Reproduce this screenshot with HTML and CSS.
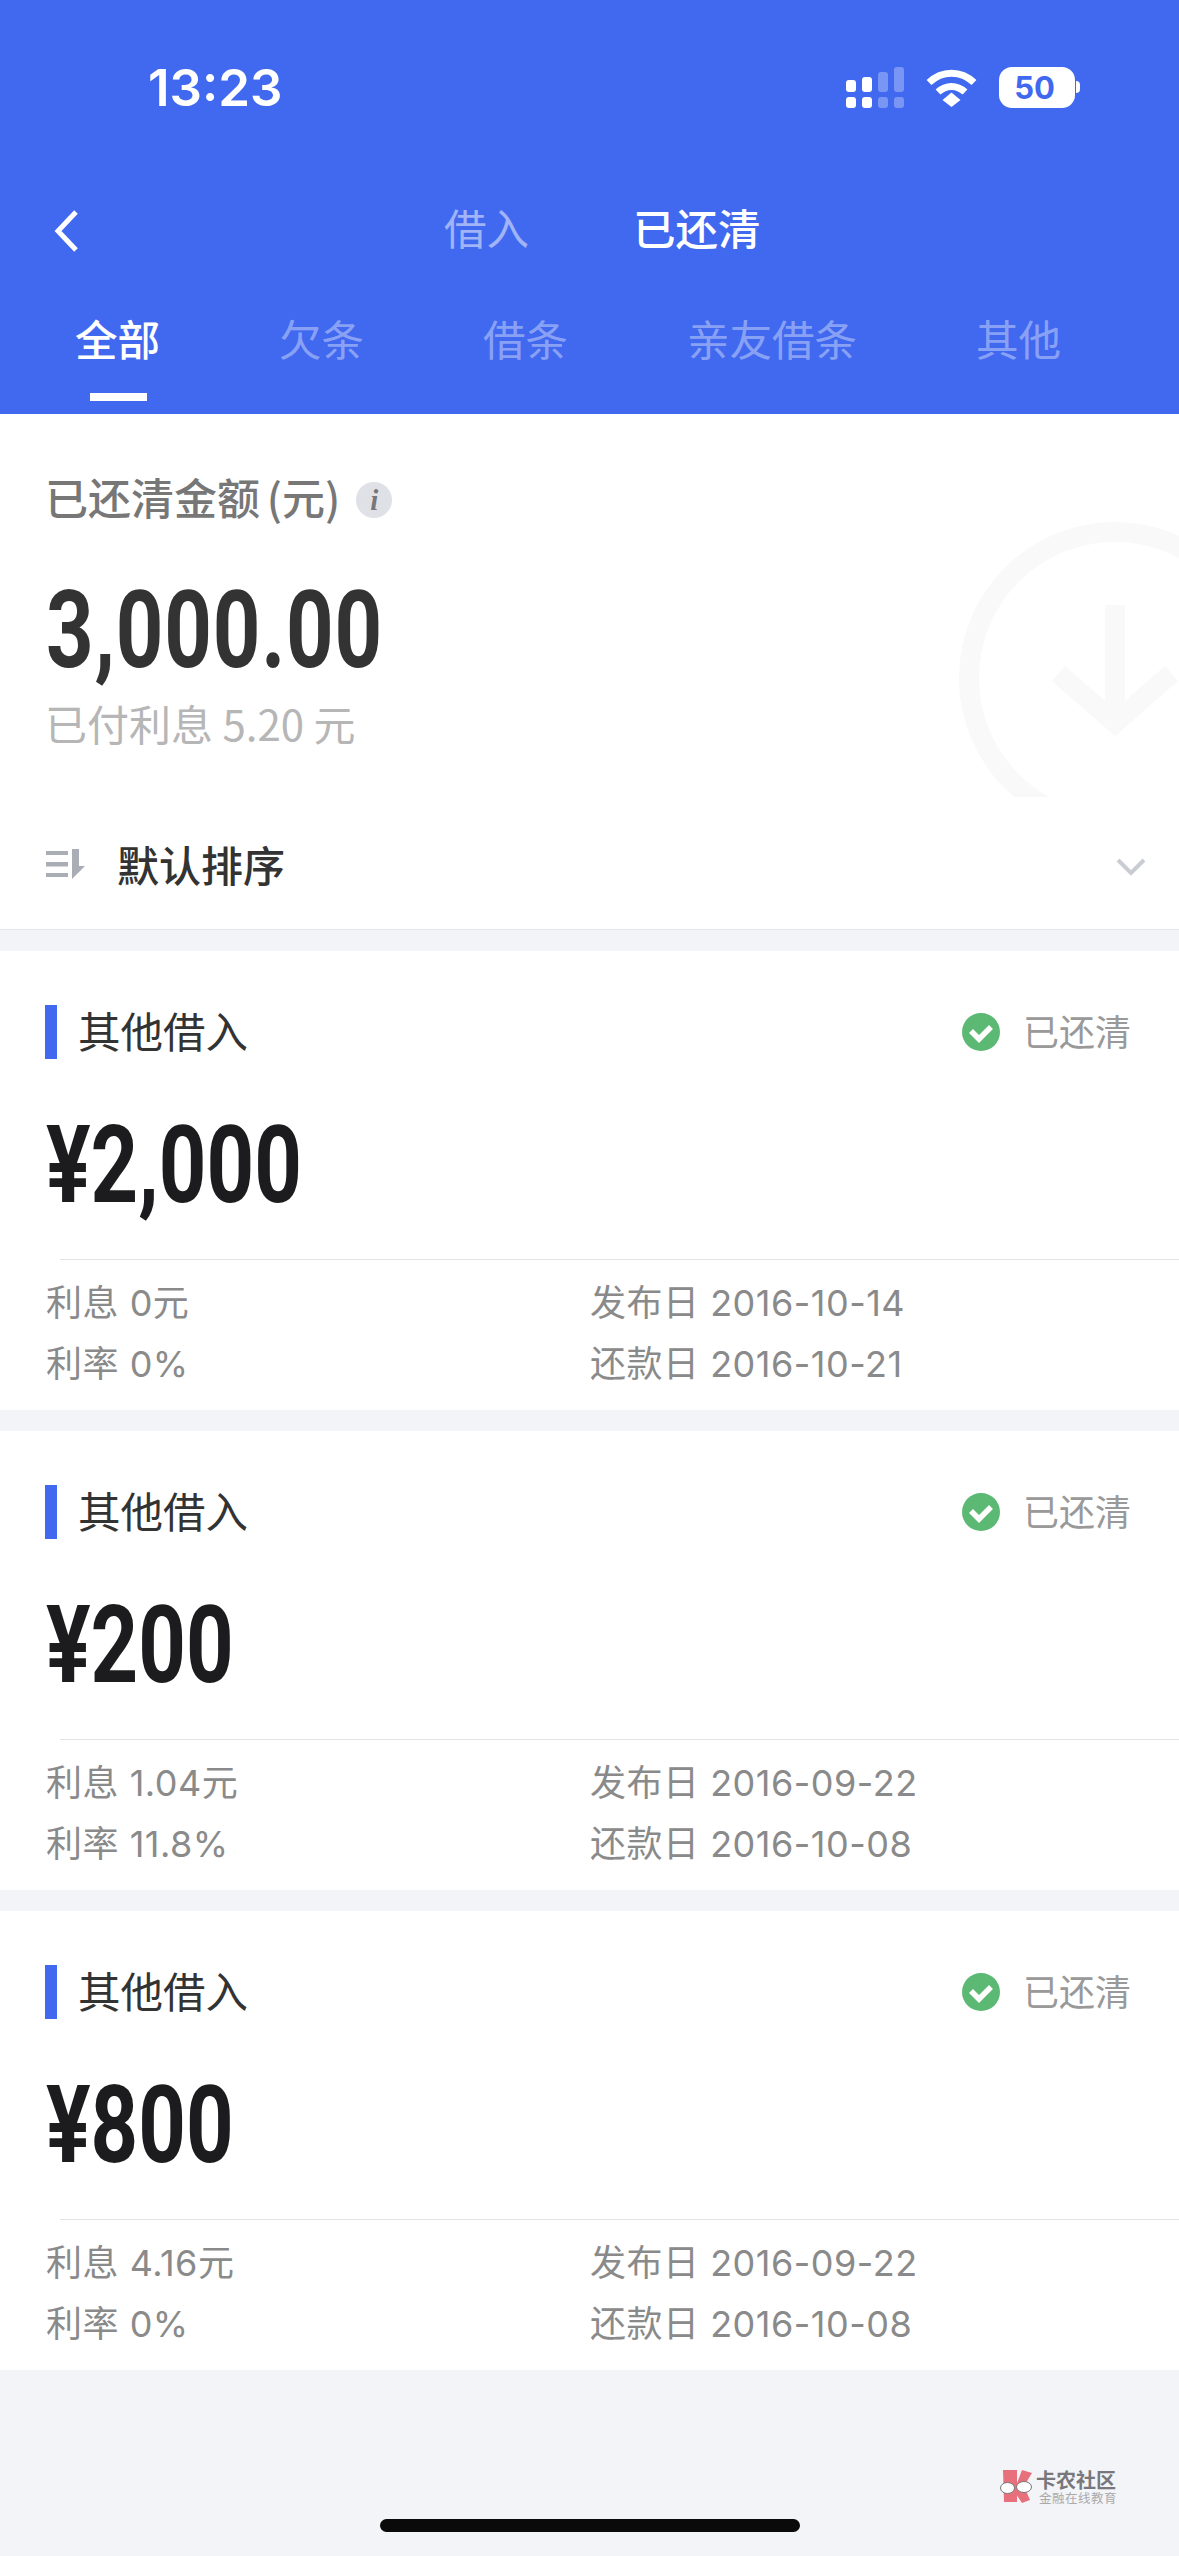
FILE: index.html
```html
<!DOCTYPE html>
<html lang="en">
<head>
    <meta charset="UTF-8">
    <meta name="viewport" content="width=device-width, initial-scale=1.0">
    <title>已还清</title>
    <link rel="stylesheet" href="styles.css">
</head>
<body>
    <div class="page">
        <header class="header">
            <div class="status-bar">
                <span class="time">13:23</span>
                <div class="status-icons">
                    <svg class="signal" width="58" height="41" viewBox="0 0 58 41" fill="#fff">
                        <rect x="0" y="13" width="10" height="12" rx="3"/>
                        <rect x="0" y="30" width="10" height="11" rx="3"/>
                        <rect x="16" y="10" width="10" height="15" rx="3"/>
                        <rect x="16" y="30" width="10" height="11" rx="3"/>
                        <g opacity="0.3">
                            <rect x="32" y="5" width="10" height="20" rx="3"/>
                            <rect x="32" y="30" width="10" height="11" rx="3"/>
                            <rect x="48" y="0" width="10" height="25" rx="3"/>
                            <rect x="48" y="30" width="10" height="11" rx="3"/>
                        </g>
                    </svg>
                    <svg class="wifi" width="51" height="38" viewBox="0 0 51 38" fill="none" stroke="#fff" stroke-width="7">
                        <path d="M3 13.5 C16 1 35 1 48 13.5"/>
                        <path d="M12 23 C20 15.5 31 15.5 39 23"/>
                        <path d="M16.5 31 L25.5 23.5 L34.5 31 L25.5 38 Z" fill="#fff" stroke="none"/>
                    </svg>
                    <div class="battery">50</div>
                </div>
            </div>

            <nav class="nav">
                <svg class="back" width="24" height="42" viewBox="0 0 24 42" fill="none" stroke="#fff" stroke-width="5">
                    <path d="M22 2 L4 21 L22 40"/>
                </svg>
                <div class="nav-links">
                    <span class="nav-link">借入</span>
                    <span class="nav-link active">已还清</span>
                </div>
            </nav>

            <div class="tabs">
                <span class="tab active">全部</span>
                <span class="tab">欠条</span>
                <span class="tab">借条</span>
                <span class="tab">亲友借条</span>
                <span class="tab">其他</span>
            </div>
        </header>

        <section class="summary">
            <svg class="summary-mark" width="259" height="307" viewBox="0 0 259 307" fill="none" stroke="#f9f9f9" stroke-width="20">
                <circle cx="195" cy="188" r="146"/>
                <path d="M195 115 V235"/>
                <path d="M138.500 183.500 L195 232.700 L251.500 183.500"/>
            </svg>
            <div class="summary-label">
                <span class="summary-title">已还清金额 (元)</span>
                <span class="info-icon">i</span>
            </div>
            <div class="big-amount summary-amount"><span>3,000.00</span></div>
            <div class="summary-sub">已付利息 5.20 元</div>
            <div class="sort-row">
                <svg class="sort-icon" width="40" height="30" viewBox="0 0 40 30" fill="#a9adb6">
                    <rect x="0" y="2" width="22" height="4"/>
                    <rect x="0" y="13" width="22" height="4.500"/>
                    <rect x="0" y="24" width="22" height="4"/>
                    <path d="M26 0 H33 V17 H39 L26 30 Z"/>
                </svg>
                <span class="sort-text">默认排序</span>
                <svg class="sort-arrow" width="30" height="18" viewBox="0 0 30 18" fill="none" stroke="#c9cdd3" stroke-width="4">
                    <path d="M2 2 L15 15 L28 2"/>
                </svg>
            </div>
        </section>

        <section class="card">
            <div class="card-head">
                <span class="card-title">其他借入</span>
                <div class="card-status">
                    <svg class="check" width="38" height="38" viewBox="0 0 38 38">
                        <circle cx="19" cy="19" r="19" fill="#5cb974"/>
                        <path d="M9 18 L17 26 L29 14" fill="none" stroke="#fff" stroke-width="5.500"/>
                    </svg>
                    <span class="status-text">已还清</span>
                </div>
            </div>
            <div class="big-amount card-amount"><span>¥2,000</span></div>
            <div class="card-line"></div>
            <div class="card-info">
                <span>利息 0元</span>
                <span>发布日 2016-10-14</span>
                <span>利率 0%</span>
                <span>还款日 2016-10-21</span>
            </div>
        </section>

        <section class="card">
            <div class="card-head">
                <span class="card-title">其他借入</span>
                <div class="card-status">
                    <svg class="check" width="38" height="38" viewBox="0 0 38 38">
                        <circle cx="19" cy="19" r="19" fill="#5cb974"/>
                        <path d="M9 18 L17 26 L29 14" fill="none" stroke="#fff" stroke-width="5.500"/>
                    </svg>
                    <span class="status-text">已还清</span>
                </div>
            </div>
            <div class="big-amount card-amount"><span>¥200</span></div>
            <div class="card-line"></div>
            <div class="card-info">
                <span>利息 1.04元</span>
                <span>发布日 2016-09-22</span>
                <span>利率 11.8%</span>
                <span>还款日 2016-10-08</span>
            </div>
        </section>

        <section class="card">
            <div class="card-head">
                <span class="card-title">其他借入</span>
                <div class="card-status">
                    <svg class="check" width="38" height="38" viewBox="0 0 38 38">
                        <circle cx="19" cy="19" r="19" fill="#5cb974"/>
                        <path d="M9 18 L17 26 L29 14" fill="none" stroke="#fff" stroke-width="5.500"/>
                    </svg>
                    <span class="status-text">已还清</span>
                </div>
            </div>
            <div class="big-amount card-amount"><span>¥800</span></div>
            <div class="card-line"></div>
            <div class="card-info">
                <span>利息 4.16元</span>
                <span>发布日 2016-09-22</span>
                <span>利率 0%</span>
                <span>还款日 2016-10-08</span>
            </div>
        </section>

        <div class="watermark">
            <svg width="34" height="36" viewBox="0 0 34 36">
                <path d="M4 1 H18 V33 H5 Z" fill="#e8707c"/>
                <path d="M23 1 L33 4 L25 17 L31 31 L23 34 L15 22 Z" fill="#e8707c"/>
                <ellipse cx="8.500" cy="19" rx="7" ry="5.500" fill="#fff" stroke="#777" stroke-width="1"/>
                <ellipse cx="25" cy="18" rx="7.500" ry="5.500" fill="#fff" stroke="#777" stroke-width="1"/>
            </svg>
            <div class="watermark-text">
                <span class="watermark-name">卡农社区</span>
                <span class="watermark-sub">金融在线教育</span>
            </div>
        </div>

        <div class="home-indicator"></div>
    </div>
</body>
</html>
```

FILE: styles.css
```css
* {
    margin: 0;
    padding: 0;
    box-sizing: border-box;
}

body {
    font-family: "Noto Sans CJK SC", sans-serif;
    background: #f3f4f8;
    width: 1179px;
    height: 2556px;
    overflow: hidden;
}

.page {
    position: relative;
    width: 1179px;
    height: 2556px;
}

.header {
    background: #4169f0;
    height: 414px;
    padding-top: 67px;
    color: #ffffff;
}

.status-bar {
    display: flex;
    justify-content: space-between;
    align-items: center;
    height: 41px;
    padding: 0 98px 0 148px;
}

.time {
    font-family: Inter, sans-serif;
    font-size: 51px;
    font-weight: 600;
}

.status-icons {
    display: flex;
    align-items: center;
    gap: 22px;
}

.battery {
    position: relative;
    width: 76px;
    height: 41px;
    margin-right: 6px;
    padding-right: 5px;
    background: #ffffff;
    border-radius: 13px;
    color: #4169f0;
    font-family: Inter, sans-serif;
    font-size: 31px;
    font-weight: 700;
    line-height: 41px;
    text-align: center;
}

.battery::after {
    content: '';
    position: absolute;
    top: 14px;
    right: -5px;
    width: 4px;
    height: 12px;
    background: #ffffff;
    border-radius: 0 6px 6px 0;
}

.nav {
    display: flex;
    align-items: center;
    height: 60px;
    margin-top: 93px;
    padding-left: 54px;
}

.nav-links {
    display: flex;
    gap: 104px;
    margin: -8px 0 0 366px;
}

.nav-link {
    font-size: 42.5px;
    line-height: 60px;
    color: rgba(255, 255, 255, 0.5);
}

.nav-link.active {
    color: #ffffff;
    font-weight: 500;
}

.tabs {
    display: flex;
    gap: 119px;
    margin-top: 47px;
    padding-left: 75px;
}

.tab {
    position: relative;
    font-size: 42.5px;
    line-height: 60px;
    color: rgba(255, 255, 255, 0.4);
}

.tab.active {
    color: #ffffff;
    font-weight: 500;
}

.tab.active::after {
    content: '';
    position: absolute;
    left: 15px;
    top: 85px;
    width: 57px;
    height: 8px;
    background: #ffffff;
}

.summary {
    position: relative;
    background: #ffffff;
    height: 516px;
    padding: 57px 0 0 45px;
    border-bottom: 1px solid #e6e6ea;
}

.summary-mark {
    position: absolute;
    top: 76px;
    right: 0;
}

.summary-label {
    position: relative;
    display: flex;
    align-items: center;
    gap: 16px;
    height: 50px;
    font-size: 43px;
    font-weight: 500;
    color: #777777;
}

.summary-title {
    word-spacing: -3px;
}

.info-icon {
    width: 36px;
    height: 36px;
    margin-top: 8px;
    border-radius: 50%;
    background: #e0e1e6;
    color: #777777;
    font-family: "Liberation Serif", serif;
    font-size: 29px;
    font-style: italic;
    font-weight: 700;
    line-height: 36px;
    text-align: center;
}

.big-amount {
    position: relative;
    height: 110px;
    font-family: Roboto, sans-serif;
    font-size: 108px;
    font-weight: 700;
    line-height: 110px;
}

.big-amount span {
    display: inline-block;
    transform: scaleX(0.77);
    transform-origin: left center;
    white-space: nowrap;
}

.summary-amount {
    margin-top: 54px;
    margin-left: 1px;
    letter-spacing: 1px;
    color: #333333;
}

.summary-sub {
    position: relative;
    margin-top: 13px;
    font-size: 42px;
    line-height: 50px;
    color: #b6b6b6;
}

.sort-row {
    position: relative;
    display: flex;
    align-items: center;
    height: 60px;
    margin-top: 89px;
    margin-left: 1px;
    padding-right: 33px;
}

.sort-icon {
    margin-top: -6px;
}

.sort-text {
    flex: 1;
    margin: -8px 0 0 31px;
    font-size: 42px;
    font-weight: 500;
    color: #333333;
}

.card {
    background: #ffffff;
    height: 459px;
    margin-top: 21px;
    padding-top: 54px;
}

.card-head {
    display: flex;
    justify-content: space-between;
    align-items: center;
    height: 54px;
    margin-left: 45px;
    padding-left: 12px;
    padding-right: 48px;
    border-left: 12px solid #4169f0;
}

.card-title {
    margin: -5px 0 0 9px;
    font-size: 42.5px;
    color: #333333;
}

.card-status {
    display: flex;
    align-items: center;
    gap: 23px;
    font-size: 36px;
    color: #999999;
}

.status-text {
    margin-top: -5px;
}

.card-amount {
    margin: 51px 0 0 46px;
    color: #1c1c1e;
}

.card-line {
    height: 1px;
    margin: 39px 0 0 60px;
    background: #e4e4e6;
}

.card-info {
    display: grid;
    grid-template-columns: 544px 1fr;
    grid-auto-rows: 61px;
    align-items: center;
    margin-top: 9px;
    padding-left: 46px;
    font-family: Inter, "Noto Sans CJK SC", sans-serif;
    font-size: 36px;
    letter-spacing: 0.5px;
    color: #8a8a8a;
}

.watermark {
    position: absolute;
    left: 999px;
    top: 2469px;
    display: flex;
    gap: 3px;
}

.watermark-text {
    display: flex;
    flex-direction: column;
}

.watermark-name {
    font-size: 20px;
    font-weight: 700;
    line-height: 22px;
    color: #77777c;
}

.watermark-sub {
    margin-left: 3px;
    font-size: 12.5px;
    line-height: 13px;
    letter-spacing: 0.5px;
    color: #aaaaaa;
}

.home-indicator {
    position: absolute;
    left: 380px;
    top: 2519px;
    width: 420px;
    height: 13px;
    border-radius: 7px;
    background: #0a0a0a;
}
```
